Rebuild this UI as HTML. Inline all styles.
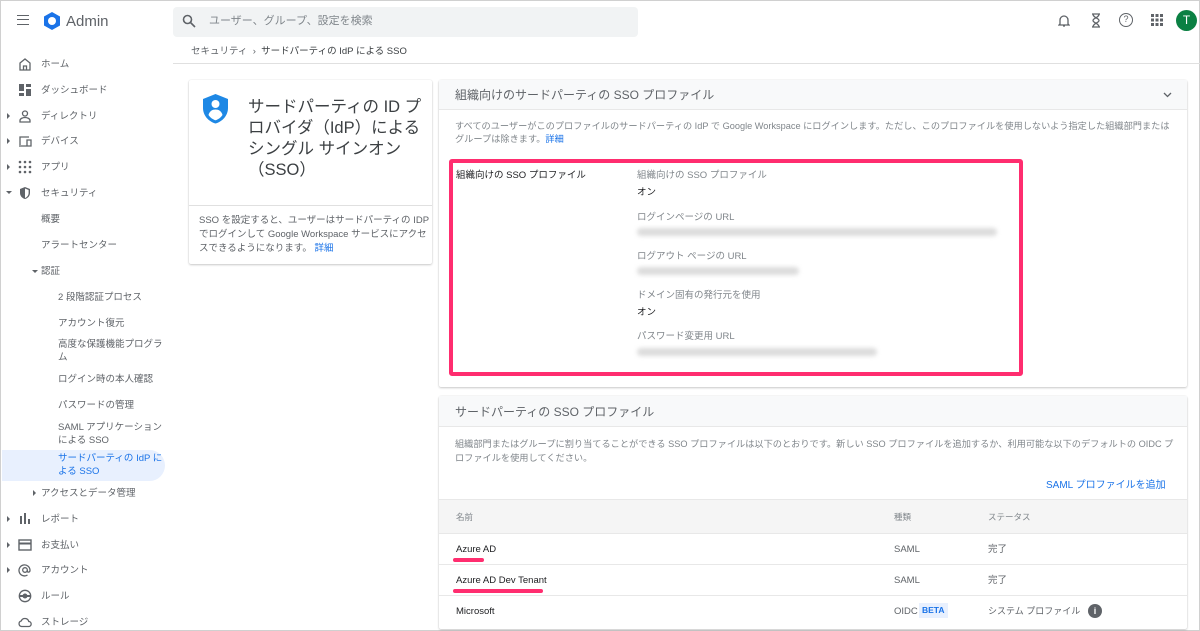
<!DOCTYPE html>
<html><head><meta charset="utf-8"><style>
*{box-sizing:border-box;margin:0;padding:0}
body{width:1200px;height:631px;overflow:hidden;background:#fff;font-family:"Liberation Sans","Noto Sans CJK JP",sans-serif;color:#3c4043;position:relative;border:1px solid #d0d0d0}
.a{position:absolute;white-space:nowrap;line-height:13px}
.s{font-size:9.5px;color:#5f6368}
.ic{position:absolute;left:17px;width:14px;height:14px}
.tri{position:absolute;left:6px;width:0;height:0;border-top:3px solid transparent;border-bottom:3px solid transparent;border-left:3px solid #5f6368}
.card{position:absolute;background:#fff;box-shadow:0 1px 2px rgba(0,0,0,.2),0 0 1px rgba(0,0,0,.15);border-radius:2px}
.blur{position:absolute;height:8px;background:#dcdcdc;filter:blur(2px);border-radius:4px}
.lab{font-size:9.5px;color:#80868b}
.val{font-size:9.5px;color:#202124}
</style></head><body>
<!-- header -->
<div class="a" style="left:16px;top:14px;width:12px;height:10px;border-top:1.5px solid #5f6368;border-bottom:1.5px solid #5f6368"><div style="margin-top:3px;border-top:1.5px solid #5f6368"></div></div>
<svg class="a" style="left:41px;top:10px" width="20" height="20" viewBox="0 0 20 20"><polygon points="10,1 18,5.5 18,14.5 10,19 2,14.5 2,5.5" fill="#1a73e8"/><circle cx="10" cy="10" r="4" fill="#fff"/></svg>
<div class="a" style="left:65px;top:12px;font-size:15px;line-height:17px;color:#5f6368">Admin</div>
<div class="a" style="left:172px;top:6px;width:465px;height:30px;background:#f1f3f4;border-radius:4px"></div>
<svg class="a" style="left:181px;top:13px" width="14" height="14" viewBox="0 0 14 14"><circle cx="5.5" cy="5.5" r="4" fill="none" stroke="#5f6368" stroke-width="1.6"/><line x1="8.5" y1="8.5" x2="13" y2="13" stroke="#5f6368" stroke-width="1.6"/></svg>
<div class="a" style="left:208px;top:14px;font-size:11px;color:#80868b">ユーザー、グループ、設定を検索</div>
<svg class="a" style="left:1057px;top:13px" width="12" height="14" viewBox="0 0 12 14"><path d="M2 10V6a4 4 0 0 1 8 0v4l1 1H1z M5 12h2" fill="none" stroke="#5f6368" stroke-width="1.3"/></svg>
<svg class="a" style="left:1090px;top:12px" width="10" height="15" viewBox="0 0 10 15"><path d="M1 1h8M1 14h8M2 1c0 4 6 4 6 6.5S2 10 2 14M8 1c0 4-6 4-6 6.5S8 10 8 14" fill="none" stroke="#5f6368" stroke-width="1.3"/></svg>
<div class="a" style="left:1118px;top:12px;width:14px;height:14px;border:1.4px solid #5f6368;border-radius:50%;font-size:9px;text-align:center;line-height:11px;color:#5f6368">?</div>
<svg class="a" style="left:1150px;top:13px" width="12" height="12" viewBox="0 0 12 12" fill="#5f6368"><rect x="0" y="0" width="3" height="3"/><rect x="4.5" y="0" width="3" height="3"/><rect x="9" y="0" width="3" height="3"/><rect x="0" y="4.5" width="3" height="3"/><rect x="4.5" y="4.5" width="3" height="3"/><rect x="9" y="4.5" width="3" height="3"/><rect x="0" y="9" width="3" height="3"/><rect x="4.5" y="9" width="3" height="3"/><rect x="9" y="9" width="3" height="3"/></svg>
<div class="a" style="left:1175px;top:9px;width:21px;height:21px;border-radius:50%;background:#0b8043;color:#fff;font-size:12px;text-align:center;line-height:21px">T</div>
<!-- breadcrumb -->
<div class="a s" style="left:190px;top:44px">セキュリティ &nbsp;›&nbsp; <span style="color:#3c4043">サードパーティの IdP による SSO</span></div>
<div class="a" style="left:172px;top:62px;width:1028px;height:1px;background:#e0e0e0"></div>
<!-- sidebar -->
<svg class="ic" style="top:56px" viewBox="0 0 14 14"><path d="M2 6L7 2l5 4v7H2z M5.5 13V9h3v4" fill="none" stroke="#5f6368" stroke-width="1.3"/></svg>
<div class="a s" style="left:40px;top:57px">ホーム</div>
<svg class="ic" style="top:82px" viewBox="0 0 14 14" fill="#5f6368"><rect x="1" y="1" width="5" height="7"/><rect x="8" y="1" width="5" height="3"/><rect x="8" y="6" width="5" height="7"/><rect x="1" y="10" width="5" height="3"/></svg>
<div class="a s" style="left:40px;top:83px">ダッシュボード</div>
<div class="tri" style="top:112px"></div>
<svg class="ic" style="top:108px" viewBox="0 0 14 14"><circle cx="7" cy="4.5" r="2.5" fill="none" stroke="#5f6368" stroke-width="1.3"/><path d="M2 13v-1.5c0-2 3-3 5-3s5 1 5 3V13z" fill="none" stroke="#5f6368" stroke-width="1.3"/></svg>
<div class="a s" style="left:40px;top:109px">ディレクトリ</div>
<div class="tri" style="top:137px"></div>
<svg class="ic" style="top:133px" viewBox="0 0 14 14"><path d="M1 12h8M2 11V3h9M9 6h4v6H9z" fill="none" stroke="#5f6368" stroke-width="1.3"/></svg>
<div class="a s" style="left:40px;top:134px">デバイス</div>
<div class="tri" style="top:163px"></div>
<svg class="ic" style="top:159px" viewBox="0 0 14 14" fill="#5f6368"><circle cx="2" cy="2" r="1.3"/><circle cx="7" cy="2" r="1.3"/><circle cx="12" cy="2" r="1.3"/><circle cx="2" cy="7" r="1.3"/><circle cx="7" cy="7" r="1.3"/><circle cx="12" cy="7" r="1.3"/><circle cx="2" cy="12" r="1.3"/><circle cx="7" cy="12" r="1.3"/><circle cx="12" cy="12" r="1.3"/></svg>
<div class="a s" style="left:40px;top:160px">アプリ</div>
<div class="a" style="left:5px;top:190px;border-left:3px solid transparent;border-right:3px solid transparent;border-top:3px solid #5f6368"></div>
<svg class="ic" style="top:185px" viewBox="0 0 14 14"><path d="M7 1l5 2v4c0 3-2.5 5.5-5 6-2.5-.5-5-3-5-6V3z" fill="#5f6368"/><path d="M7 2.5v9.5c1.8-.6 3.6-2.6 3.6-5V4z" fill="#fff"/></svg>
<div class="a s" style="left:40px;top:186px">セキュリティ</div>
<div class="a s" style="left:40px;top:212px">概要</div>
<div class="a s" style="left:40px;top:238px">アラートセンター</div>
<div class="a" style="left:31px;top:269px;border-left:3px solid transparent;border-right:3px solid transparent;border-top:3px solid #5f6368"></div>
<div class="a s" style="left:40px;top:264px">認証</div>
<div class="a s" style="left:57px;top:290px">2 段階認証プロセス</div>
<div class="a s" style="left:57px;top:316px">アカウント復元</div>
<div class="a s" style="left:57px;top:337px">高度な保護機能プログラ<br>ム</div>
<div class="a s" style="left:57px;top:372px">ログイン時の本人確認</div>
<div class="a s" style="left:57px;top:398px">パスワードの管理</div>
<div class="a s" style="left:57px;top:420px">SAML アプリケーション<br>による SSO</div>
<div class="a" style="left:1px;top:449px;width:163px;height:31px;background:#e8f0fe;border-radius:0 16px 16px 0"></div>
<div class="a s" style="left:57px;top:451px;color:#1a73e8">サードパーティの IdP に<br>よる SSO</div>
<div class="a" style="left:32px;top:489px;border-top:3px solid transparent;border-bottom:3px solid transparent;border-left:3px solid #5f6368"></div>
<div class="a s" style="left:40px;top:486px">アクセスとデータ管理</div>
<div class="tri" style="top:515px"></div>
<svg class="ic" style="top:511px" viewBox="0 0 14 14" fill="#5f6368"><rect x="2" y="4" width="2" height="8"/><rect x="6" y="1" width="2" height="11"/><rect x="10" y="7" width="2" height="5"/></svg>
<div class="a s" style="left:40px;top:512px">レポート</div>
<div class="tri" style="top:541px"></div>
<svg class="ic" style="top:537px" viewBox="0 0 14 14"><rect x="1" y="2" width="12" height="10" fill="none" stroke="#5f6368" stroke-width="1.4"/><rect x="1" y="4.5" width="12" height="2" fill="#5f6368"/></svg>
<div class="a s" style="left:40px;top:538px">お支払い</div>
<div class="tri" style="top:566px"></div>
<svg class="ic" style="top:562px" viewBox="0 0 14 14"><circle cx="7" cy="7" r="2.3" fill="none" stroke="#5f6368" stroke-width="1.3"/><path d="M9.3 7v1.2c0 1.3 2.7 1.3 2.7-.8A5.5 5.5 0 1 0 9.5 12" fill="none" stroke="#5f6368" stroke-width="1.3"/></svg>
<div class="a s" style="left:40px;top:563px">アカウント</div>
<svg class="ic" style="top:588px" viewBox="0 0 14 14"><circle cx="7" cy="7" r="5.7" fill="none" stroke="#5f6368" stroke-width="1.3"/><circle cx="7" cy="7" r="2.5" fill="#5f6368"/><rect x="1" y="6" width="12" height="2" fill="#5f6368"/></svg>
<div class="a s" style="left:40px;top:589px">ルール</div>
<svg class="ic" style="top:614px" viewBox="0 0 14 14"><path d="M3.5 11.5h7a2.5 2.5 0 0 0 .3-5A4 4 0 0 0 3.2 6 2.8 2.8 0 0 0 3.5 11.5z" fill="none" stroke="#5f6368" stroke-width="1.3"/></svg>
<div class="a s" style="left:40px;top:615px">ストレージ</div>
<!-- left card -->
<div class="card" style="left:188px;top:79px;width:243px;height:184px">
<svg class="a" style="left:13px;top:13px" width="27" height="31" viewBox="0 0 27 31"><path d="M13.5 1L26 6v9c0 7.5-5.5 13.5-12.5 15.5C6.5 28.5 1 22.5 1 15V6z" fill="#1e88e5"/><circle cx="13.5" cy="11" r="4" fill="#fff"/><path d="M6.5 22c1-4 4-5.5 7-5.5s6 1.5 7 5.5c-2 3-4.5 4.5-7 5.3-2.5-.8-5-2.3-7-5.3z" fill="#fff"/></svg>
<div class="a" style="left:59px;top:17px;font-size:16.5px;line-height:21px;color:#3c4043">サードパーティの ID プ<br>ロバイダ（IdP）による<br>シングル サインオン<br>（SSO）</div>
<div class="a" style="left:0;top:125px;width:243px;height:1px;background:#e0e0e0"></div>
<div class="a" style="left:10px;top:134px;font-size:9.5px;line-height:14px;color:#5f6368">SSO を設定すると、ユーザーはサードパーティの IDP<br>でログインして Google Workspace サービスにアクセ<br>スできるようになります。 <span style="color:#1a73e8">詳細</span></div>
</div>
<!-- card 1 -->
<div class="card" style="left:438px;top:79px;width:748px;height:307px">
<div class="a" style="left:0;top:0;width:748px;height:30px;background:#f8f9fa;border-bottom:1px solid #e8e8e8"></div>
<div class="a" style="left:16px;top:8px;font-size:12px;line-height:15px;color:#5f6368">組織向けのサードパーティの SSO プロファイル</div>
<svg class="a" style="left:724px;top:12px" width="9" height="6" viewBox="0 0 9 6"><path d="M1 1l3.5 3.5L8 1" fill="none" stroke="#5f6368" stroke-width="1.3"/></svg>
<div class="a" style="left:16px;top:40px;font-size:9.2px;line-height:13px;color:#80868b">すべてのユーザーがこのプロファイルのサードパーティの IdP で Google Workspace にログインします。ただし、このプロファイルを使用しないよう指定した組織部門または<br>グループは除きます。<span style="color:#1a73e8">詳細</span></div>
<div class="a" style="left:10px;top:79px;width:574px;height:217px;border:4px solid #ff2d6f;border-radius:3px"></div>
<div class="a val" style="left:17px;top:89px">組織向けの SSO プロファイル</div>
<div class="a lab" style="left:198px;top:89px">組織向けの SSO プロファイル</div>
<div class="a val" style="left:198px;top:106px">オン</div>
<div class="a lab" style="left:198px;top:131px">ログインページの URL</div>
<div class="blur" style="left:198px;top:148px;width:360px"></div>
<div class="a lab" style="left:198px;top:170px">ログアウト ページの URL</div>
<div class="blur" style="left:198px;top:187px;width:162px"></div>
<div class="a lab" style="left:198px;top:209px">ドメイン固有の発行元を使用</div>
<div class="a val" style="left:198px;top:226px">オン</div>
<div class="a lab" style="left:198px;top:250px">パスワード変更用 URL</div>
<div class="blur" style="left:198px;top:268px;width:240px"></div>
</div>
<!-- card 2 -->
<div class="card" style="left:438px;top:395px;width:748px;height:233px">
<div class="a" style="left:0;top:0;width:748px;height:31px;background:#f8f9fa;border-bottom:1px solid #e8e8e8"></div>
<div class="a" style="left:16px;top:9px;font-size:12px;line-height:15px;color:#5f6368">サードパーティの SSO プロファイル</div>
<div class="a" style="left:16px;top:41px;font-size:9.2px;line-height:14px;color:#80868b">組織部門またはグループに割り当てることができる SSO プロファイルは以下のとおりです。新しい SSO プロファイルを追加するか、利用可能な以下のデフォルトの OIDC プ<br>ロファイルを使用してください。</div>
<div class="a" style="left:607px;top:83px;font-size:10px;color:#1a73e8">SAML プロファイルを追加</div>
<div class="a" style="left:0;top:103px;width:748px;height:35px;background:#f5f5f5;border-top:1px solid #e8e8e8;border-bottom:1px solid #e8e8e8"></div>
<div class="a lab" style="left:17px;top:115px;font-size:8.5px">名前</div>
<div class="a lab" style="left:455px;top:115px;font-size:8.5px">種類</div>
<div class="a lab" style="left:549px;top:115px;font-size:8.5px">ステータス</div>
<div class="a val" style="left:17px;top:147px">Azure AD</div>
<div class="a" style="left:14px;top:162px;width:31px;height:4px;background:#ff2d6f;border-radius:2px"></div>
<div class="a lab" style="left:455px;top:147px;color:#5f6368">SAML</div>
<div class="a lab" style="left:549px;top:147px;color:#5f6368">完了</div>
<div class="a" style="left:0;top:168px;width:748px;height:1px;background:#e8e8e8"></div>
<div class="a val" style="left:17px;top:178px">Azure AD Dev Tenant</div>
<div class="a" style="left:14px;top:193px;width:90px;height:4px;background:#ff2d6f;border-radius:2px"></div>
<div class="a lab" style="left:455px;top:178px;color:#5f6368">SAML</div>
<div class="a lab" style="left:549px;top:178px;color:#5f6368">完了</div>
<div class="a" style="left:0;top:199px;width:748px;height:1px;background:#e8e8e8"></div>
<div class="a val" style="left:17px;top:209px">Microsoft</div>
<div class="a lab" style="left:455px;top:209px;color:#5f6368">OIDC</div>
<div class="a" style="left:480px;top:207px;padding:2px 3px;line-height:11px;background:#e8f0fe;color:#1a73e8;font-size:8.5px;font-weight:bold">BETA</div>
<div class="a lab" style="left:549px;top:209px;color:#5f6368;font-size:9px">システム プロファイル</div>
<div class="a" style="left:649px;top:208px;width:14px;height:14px;border-radius:50%;background:#5f6368;color:#fff;font-size:9px;font-weight:bold;text-align:center;line-height:14px">i</div>
</div>
</body></html>
